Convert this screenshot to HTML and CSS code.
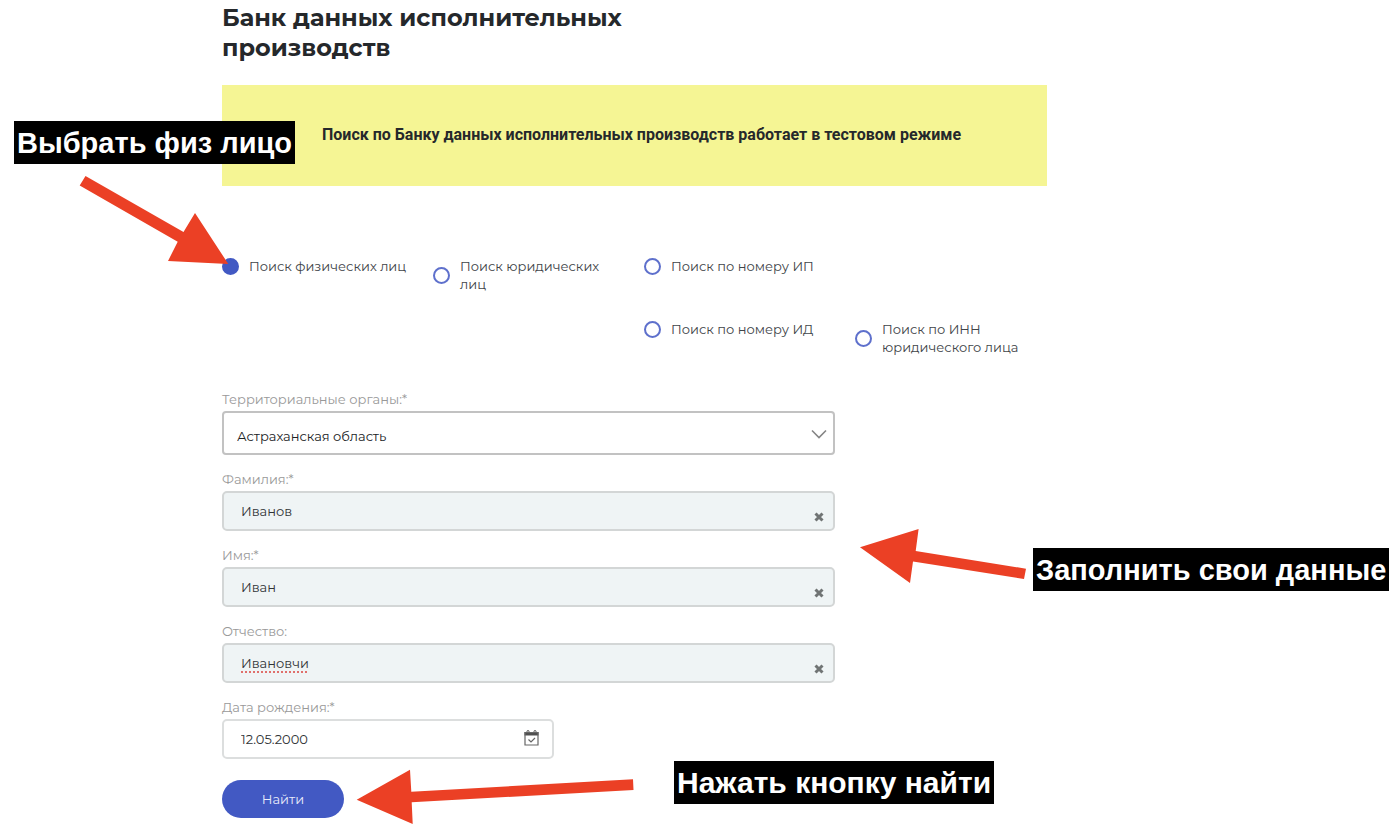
FILE: index.html
```html
<!DOCTYPE html>
<html lang="ru">
<head>
    <meta charset="UTF-8">
    <meta name="viewport" content="width=device-width, initial-scale=1">
    <title>Банк данных исполнительных производств</title>
    <link rel="stylesheet" href="styles.css">
</head>
<body>

<main class="container">
    <h1>Банк данных исполнительных производств</h1>

    <div class="notice">Поиск по Банку данных исполнительных производств работает в тестовом режиме</div>

    <form class="search">
        <div class="types">
            <label class="type"><input type="radio" name="type" checked><span>Поиск физических лиц</span></label>
            <label class="type"><input type="radio" name="type"><span>Поиск юридических лиц</span></label>
            <label class="type"><input type="radio" name="type"><span>Поиск по номеру ИП</span></label>
            <label class="type type-third"><input type="radio" name="type"><span>Поиск по номеру ИД</span></label>
            <label class="type"><input type="radio" name="type"><span>Поиск по ИНН юридического лица</span></label>
        </div>

        <div class="fields">
            <div class="field">
                <label for="region">Территориальные органы:*</label>
                <div class="control">
                    <select id="region">
                        <option>Астраханская область</option>
                    </select>
                    <svg class="chevron" viewBox="0 0 16 10"><path d="M1 1.5l7 7 7-7"/></svg>
                </div>
            </div>
            <div class="field">
                <label for="surname">Фамилия:*</label>
                <div class="control">
                    <input type="text" class="filled" id="surname" value="Иванов">
                    <button type="button" class="clear" aria-label="Очистить"><svg viewBox="0 0 10 10"><path d="M1.5 1.5l7 7M8.5 1.5l-7 7"/></svg></button>
                </div>
            </div>
            <div class="field">
                <label for="name">Имя:*</label>
                <div class="control">
                    <input type="text" class="filled" id="name" value="Иван">
                    <button type="button" class="clear" aria-label="Очистить"><svg viewBox="0 0 10 10"><path d="M1.5 1.5l7 7M8.5 1.5l-7 7"/></svg></button>
                </div>
            </div>
            <div class="field">
                <label for="patronymic">Отчество:</label>
                <div class="control">
                    <input type="text" class="filled misspelled" id="patronymic" value="Ивановчи">
                    <button type="button" class="clear" aria-label="Очистить"><svg viewBox="0 0 10 10"><path d="M1.5 1.5l7 7M8.5 1.5l-7 7"/></svg></button>
                </div>
            </div>
            <div class="field field-date">
                <label for="birthday">Дата рождения:*</label>
                <div class="control">
                    <input type="text" id="birthday" value="12.05.2000">
                    <button type="button" class="calendar" aria-label="Календарь">
                        <svg viewBox="0 0 15 16">
                            <path class="top" d="M.5 2h14v3.500H.5z"/>
                            <path class="rings" d="M3 3.500v-2a1 1 0 0 1 2 0v2zM10 3.500v-2a1 1 0 0 1 2 0v2z"/>
                            <path class="frame" d="M1 2.500h13v12.500H1z"/>
                            <path class="tick" d="M4.500 9.500l2.500 2.500 4-4"/>
                        </svg>
                    </button>
                </div>
            </div>
        </div>

        <button type="submit" class="submit">Найти</button>
    </form>
</main>

<svg class="arrows" viewBox="0 0 1400 831" aria-hidden="true">
    <path d="M85.500 176L183.500 232 195 213 228.300 264 168 261 177.700 241.700 79.700 185.500z"/>
    <path d="M860 547.300L918.600 529 915.700 551 1026 568.700 1024 579 913 561.500 910 583z"/>
    <path d="M356.700 799.700L410 769.700 411.300 791.700 633 779.300 633.500 790 411.700 802.300 412.700 824z"/>
</svg>
<p class="hint hint-type">Выбрать физ лицо</p>
<p class="hint hint-data">Заполнить свои данные</p>
<p class="hint hint-submit">Нажать кнопку найти</p>

</body>
</html>
```
FILE: styles.css
```css
* {
    box-sizing: border-box;
}

body {
    position: relative;
    margin: 0;
    background: #fff;
    color: #404448;
    font-family: Montserrat, Inter, sans-serif;
    font-size: 13px;
    line-height: 18px;
}

.container {
    max-width: 1047px;
    padding: 3px 0 12px 222px;
}

h1 {
    max-width: 420px;
    margin: 0 0 22px;
    color: #25282b;
    font-size: 24px;
    font-weight: 700;
    line-height: 30px;
}

.notice {
    padding: 38px 60px 39px 100px;
    background: #f5f594;
    color: #25282b;
    font-family: Roboto, sans-serif;
    font-size: 16px;
    font-weight: 700;
    line-height: 24px;
}

/* search type */

.types {
    display: grid;
    grid-template-columns: repeat(4, 1fr);
    grid-auto-rows: 36px;
    gap: 27px 19px;
    align-items: start;
    margin: 71px 0 31px;
}

.type {
    display: flex;
    align-items: center;
    gap: 10px;
}

.type-third {
    grid-column: 3;
}

.type input {
    flex: none;
    appearance: none;
    width: 17px;
    height: 17px;
    margin: 0;
    border: 2px solid #5e70cc;
    border-radius: 50%;
}

.type input:checked {
    background: #4259c3;
    border-color: #4259c3;
}

/* fields */

.fields {
    max-width: 613px;
}

.field {
    margin-bottom: 12px;
}

.field-date {
    max-width: 332px;
    margin-bottom: 21px;
}

.field label {
    display: block;
    color: #999;
    line-height: 24px;
}

.control {
    position: relative;
}

.control input,
.control select {
    display: block;
    width: 100%;
    height: 40px;
    padding: 0 36px 0 17px;
    border: 2px solid #dcdede;
    border-radius: 5px;
    background: #fff;
    color: #303336;
    font: inherit;
}

.control select {
    appearance: none;
    height: 44px;
    padding: 6px 36px 0 13px;
    border-color: #c2c2c2;
    border-radius: 4px;
    color: #202224;
}

.control .filled {
    border-color: #d3d6d6;
    background: #eff4f5;
}

/* dotted line under the word */
.control .misspelled {
    background: repeating-linear-gradient(90deg, #e0706c 0 2px, transparent 2px 4px) 17px 26px / 68px 2px no-repeat #eff4f5;
}

.chevron {
    position: absolute;
    top: 18px;
    right: 8px;
    width: 16px;
    height: 10px;
    fill: none;
    stroke: #858585;
    stroke-width: 1.6;
    pointer-events: none;
}

.clear,
.calendar {
    position: absolute;
    padding: 0;
    border: 0;
    background: none;
    cursor: pointer;
}

.clear {
    right: 11px;
    bottom: 9px;
    width: 10px;
    height: 10px;
}

.calendar {
    top: 11px;
    right: 15px;
    width: 15px;
    height: 16px;
}

.clear svg,
.calendar svg {
    display: block;
}

.clear path {
    stroke: #707474;
    stroke-width: 3;
}

.calendar .top {
    fill: #505050;
}

.calendar .rings {
    fill: #fff;
    stroke: #505050;
}

.calendar .frame,
.calendar .tick {
    fill: none;
    stroke: #666;
    stroke-width: 1.2;
}

.submit {
    width: 122px;
    height: 38px;
    border: 0;
    border-radius: 19px;
    background: #4259c3;
    color: #e8ebfa;
    font: inherit;
    cursor: pointer;
}

/* hints over the page */

.arrows {
    position: absolute;
    top: 0;
    left: 0;
    width: 1400px;
    height: 831px;
    fill: #eb4025;
    pointer-events: none;
}

.hint {
    position: absolute;
    margin: 0;
    padding: 1px 3px 0;
    background: #000;
    color: #fff;
    font-family: "Liberation Sans", Arial, sans-serif;
    font-size: 29px;
    font-weight: 700;
    line-height: 42px;
    white-space: nowrap;
}

.hint-type {
    top: 121px;
    left: 14px;
}

.hint-data {
    top: 548px;
    left: 1033px;
}

.hint-submit {
    top: 761px;
    left: 674px;
    font-size: 30px;
}
```
